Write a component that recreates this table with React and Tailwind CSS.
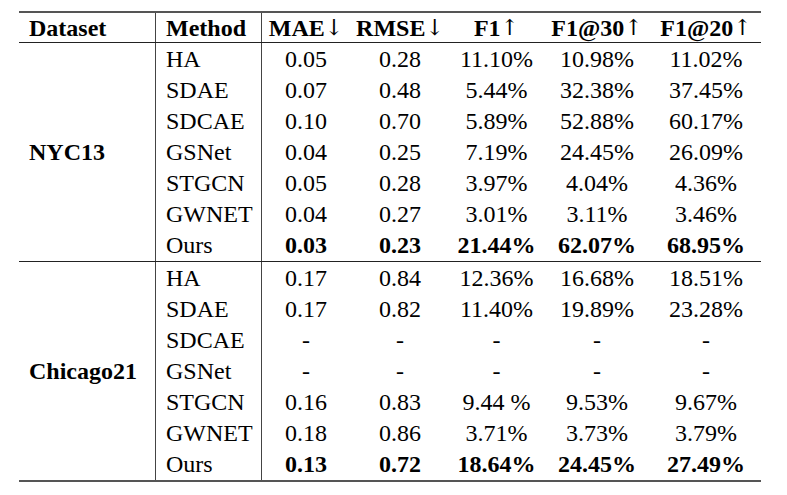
import React from "react";

const cols = "grid grid-cols-[137px_106px_88px_100px_93px_108px_110px]";

const nyc = [
  ["HA", "0.05", "0.28", "11.10%", "10.98%", "11.02%"],
  ["SDAE", "0.07", "0.48", "5.44%", "32.38%", "37.45%"],
  ["SDCAE", "0.10", "0.70", "5.89%", "52.88%", "60.17%"],
  ["GSNet", "0.04", "0.25", "7.19%", "24.45%", "26.09%"],
  ["STGCN", "0.05", "0.28", "3.97%", "4.04%", "4.36%"],
  ["GWNET", "0.04", "0.27", "3.01%", "3.11%", "3.46%"],
  ["Ours", "0.03", "0.23", "21.44%", "62.07%", "68.95%", true],
];

const chi = [
  ["HA", "0.17", "0.84", "12.36%", "16.68%", "18.51%"],
  ["SDAE", "0.17", "0.82", "11.40%", "19.89%", "23.28%"],
  ["SDCAE", "-", "-", "-", "-", "-"],
  ["GSNet", "-", "-", "-", "-", "-"],
  ["STGCN", "0.16", "0.83", "9.44 %", "9.53%", "9.67%"],
  ["GWNET", "0.18", "0.86", "3.71%", "3.73%", "3.79%"],
  ["Ours", "0.13", "0.72", "18.64%", "24.45%", "27.49%", true],
];

function Section({ name, rows, last }) {
  return (
    <div className={`flex ${last ? "" : "border-b border-[#222]"}`}>
      <div className="w-[137px] shrink-0 border-r border-[#444] flex items-center pl-[10px] font-bold">
        {name}
      </div>
      <div className="flex-1 grid grid-rows-7 h-[218px]">
        {rows.map((r) => (
          <div key={r[0]} className="grid grid-cols-[106px_88px_100px_93px_108px_110px] items-center">
            <div className="h-full flex items-center pl-[10px] border-r border-[#444]">{r[0]}</div>
            {r.slice(1, 6).map((v, i) => (
              <div key={i} className={`text-center ${r[6] ? "font-bold" : ""}`}>{v}</div>
            ))}
          </div>
        ))}
      </div>
    </div>
  );
}

function H({ t, a }) {
  return (
    <div className="flex items-center justify-center">
      {t}
      <span className="font-normal font-['DejaVu_Serif',serif] text-[22px]">{a}</span>
    </div>
  );
}

export default function App() {
  return (
    <div className="w-[787px] h-[495px] bg-white pt-[11px] pl-[19px] text-black font-['Liberation_Serif',serif] text-[24px] leading-none">
      <div className="w-[742px] border-t-2 border-b-2 border-[#555]">
        <div className={`${cols} h-[30px] items-stretch border-b border-[#222] font-bold`}>
          <div className="flex items-center pl-[10px] border-r border-[#444]">Dataset</div>
          <div className="flex items-center pl-[10px] border-r border-[#444]">Method</div>
          <H t="MAE" a="↓" />
          <H t="RMSE" a="↓" />
          <H t="F1" a="↑" />
          <H t="F1@30" a="↑" />
          <H t="F1@20" a="↑" />
        </div>
        <Section name="NYC13" rows={nyc} />
        <Section name="Chicago21" rows={chi} last />
      </div>
    </div>
  );
}
